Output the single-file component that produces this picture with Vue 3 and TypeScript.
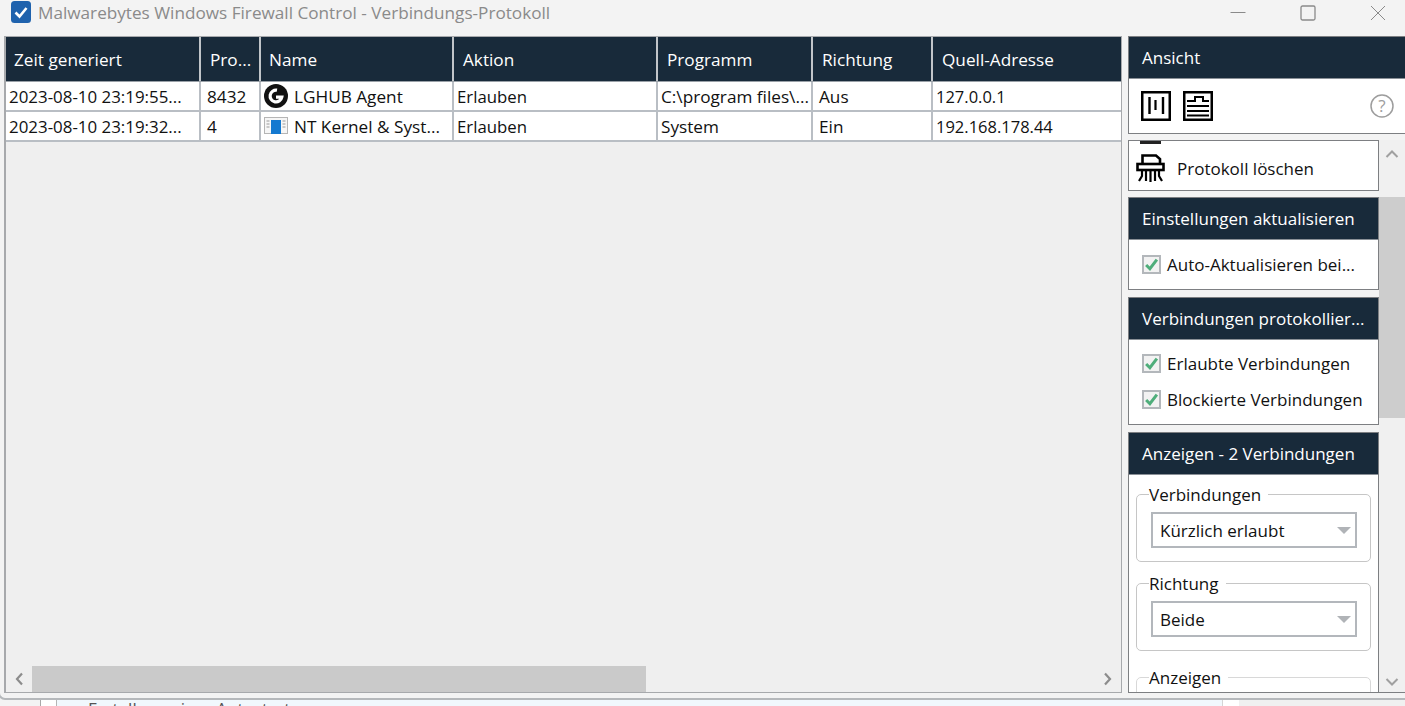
<script setup lang="ts">
interface Col { label: string; width: number }
const cols: Col[] = [
  { label: 'Zeit generiert', width: 195 },
  { label: 'Pro...', width: 60 },
  { label: 'Name', width: 193 },
  { label: 'Aktion', width: 204 },
  { label: 'Programm', width: 155 },
  { label: 'Richtung', width: 120 },
  { label: 'Quell-Adresse', width: 189 },
]
const rows = [
  { time: '2023-08-10 23:19:55...', pid: '8432', name: 'LGHUB Agent', icon: 'g', action: 'Erlauben', prog: 'C:\\program files\\...', dir: 'Aus', addr: '127.0.0.1' },
  { time: '2023-08-10 23:19:32...', pid: '4', name: 'NT Kernel & Syst...', icon: 'nt', action: 'Erlauben', prog: 'System', dir: 'Ein', addr: '192.168.178.44' },
]
const gridCols = cols.map((c) => c.width + 'px').join(' ')
</script>

<template>
  <div class="page">
    <header class="titlebar">
      <svg class="appicon" width="20" height="22" viewBox="0 0 20 22">
        <rect width="20" height="22" rx="3.500" fill="#1f62ad" />
        <path d="M4.500 11.500 8.500 15.500 15.500 7" fill="none" stroke="#fff" stroke-width="2.600" />
      </svg>
      <span class="title">Malwarebytes Windows Firewall Control - Verbindungs-Protokoll</span>
      <div class="winbtns">
        <svg width="16" height="16" viewBox="0 0 16 16"><path d="M0.500 7.500H15.500" stroke="#8a8a8a" /></svg>
        <svg width="16" height="16" viewBox="0 0 16 16"><rect x="1" y="1" width="14" height="14" rx="1.500" fill="none" stroke="#8a8a8a" stroke-width="1.300" /></svg>
        <svg width="16" height="16" viewBox="0 0 16 16"><path d="M1 1 15 15M15 1 1 15" stroke="#8a8a8a" /></svg>
      </div>
    </header>

    <main class="content">
      <section class="tablepanel">
        <div class="row head" :style="{ gridTemplateColumns: gridCols }">
          <div v-for="c in cols" :key="c.label" class="hcell">{{ c.label }}</div>
        </div>
        <div v-for="r in rows" :key="r.time" class="row body" :style="{ gridTemplateColumns: gridCols }">
          <div class="cell time">{{ r.time }}</div>
          <div class="cell pid">{{ r.pid }}</div>
          <div class="cell namecell">
            <svg v-if="r.icon === 'g'" class="rowicon" width="24" height="24" viewBox="0 0 24 24">
              <circle cx="12" cy="12" r="12" fill="#111" />
              <path d="M13 6.200A5.900 5.900 0 1 0 17.800 13.200H12" fill="none" stroke="#fff" stroke-width="3.200" />
            </svg>
            <svg v-else class="rowicon" width="24" height="18" viewBox="0 0 24 18">
              <rect x="0.500" y="0.500" width="23" height="16" fill="#f6f6f6" stroke="#b5b5b5" />
              <rect x="7" y="3" width="10" height="14" fill="#1479d0" />
              <path d="M2.500 4H5.500M2.500 7H5.500M2.500 10H5.500M18.500 4H21.500M18.500 7H21.500M18.500 10H21.500" stroke="#9a9a9a" />
            </svg>
            <span>{{ r.name }}</span>
          </div>
          <div class="cell action">{{ r.action }}</div>
          <div class="cell">{{ r.prog }}</div>
          <div class="cell dir">{{ r.dir }}</div>
          <div class="cell addr">{{ r.addr }}</div>
        </div>
        <div class="hscroll">
          <svg class="arrow" width="10" height="14" viewBox="0 0 10 14"><path d="M8 1.500 3 7l5 5.500" fill="none" stroke="#8c8c8c" stroke-width="2.200" /></svg>
          <div class="track"><div class="thumb"></div></div>
          <svg class="arrow" width="10" height="14" viewBox="0 0 10 14"><path d="M2 1.500 7 7l-5 5.500" fill="none" stroke="#8c8c8c" stroke-width="2.200" /></svg>
        </div>
      </section>

      <aside class="side">
        <section class="card ansicht">
          <h2 class="cardhead">Ansicht</h2>
          <div class="tools">
            <svg width="30" height="30" viewBox="0 0 30 30">
              <rect x="1.250" y="1.250" width="27.500" height="27.500" fill="none" stroke="#000" stroke-width="2.500" />
              <path d="M8.500 6V23M22 6V23" stroke="#000" stroke-width="2.400" />
              <path d="M14.500 9V19" stroke="#000" stroke-width="2.200" />
            </svg>
            <svg width="30" height="30" viewBox="0 0 30 30">
              <rect x="1.250" y="1.250" width="27.500" height="27.500" fill="none" stroke="#000" stroke-width="2.500" />
              <path d="M4 10H12V6H20V10H26M4 15H26M4 20H26M4 24.500H26" fill="none" stroke="#000" stroke-width="2" />
            </svg>
            <svg class="help" width="24" height="24" viewBox="0 0 24 24">
              <circle cx="12" cy="12" r="11" fill="none" stroke="#9d9d9d" stroke-width="1.500" />
              <text x="12" y="18" text-anchor="middle" font-size="17" fill="#9d9d9d" font-family="Open Sans, sans-serif">?</text>
            </svg>
          </div>
        </section>

        <div class="scrollarea">
          <div class="stack">
            <section class="card shred">
              <span class="stub"></span>
              <div class="shredrow">
                <svg width="30" height="30" viewBox="0 0 30 30">
                  <path d="M6.500 11V2.500H20L24 6V11" fill="none" stroke="#000" stroke-width="2.600" />
                  <rect x="1.500" y="11" width="26" height="6" fill="none" stroke="#000" stroke-width="2.600" />
                  <path d="M6 18V23L3 28M10 18V28M14.500 18V29M19 18V28M23 18V23L26 28" fill="none" stroke="#000" stroke-width="2.200" />
                </svg>
                <span>Protokoll löschen</span>
              </div>
            </section>

            <section class="card c1">
              <h2 class="cardhead">Einstellungen aktualisieren</h2>
              <div class="checks one">
                <label class="check"><span class="box"><svg width="15" height="15" viewBox="0 0 14 14"><path d="M2 7.500 5.500 11 12 2.500" fill="none" stroke="#4fae7b" stroke-width="2.800" /></svg></span>Auto-Aktualisieren bei...</label>
              </div>
            </section>

            <section class="card c2">
              <h2 class="cardhead">Verbindungen protokollier...</h2>
              <div class="checks">
                <label class="check"><span class="box"><svg width="15" height="15" viewBox="0 0 14 14"><path d="M2 7.500 5.500 11 12 2.500" fill="none" stroke="#4fae7b" stroke-width="2.800" /></svg></span>Erlaubte Verbindungen</label>
                <label class="check"><span class="box"><svg width="15" height="15" viewBox="0 0 14 14"><path d="M2 7.500 5.500 11 12 2.500" fill="none" stroke="#4fae7b" stroke-width="2.800" /></svg></span>Blockierte Verbindungen</label>
              </div>
            </section>

            <section class="card last">
              <h2 class="cardhead">Anzeigen - 2 Verbindungen</h2>
              <div class="groups">
                <fieldset class="group">
                  <legend>Verbindungen</legend>
                  <div class="select"><span>Kürzlich erlaubt</span><i class="caret"></i></div>
                </fieldset>
                <fieldset class="group">
                  <legend>Richtung</legend>
                  <div class="select"><span>Beide</span><i class="caret"></i></div>
                </fieldset>
                <fieldset class="group cut">
                  <legend>Anzeigen</legend>
                </fieldset>
              </div>
            </section>
          </div>
          <div class="vscroll">
            <svg width="14" height="10" viewBox="0 0 14 10"><path d="M1.500 8 7 2.500 12.500 8" fill="none" stroke="#a0a0a0" stroke-width="2" /></svg>
            <div class="vtrack"><div class="vthumb"></div></div>
            <svg width="14" height="10" viewBox="0 0 14 10"><path d="M1.500 2 7 7.500 12.500 2" fill="none" stroke="#a0a0a0" stroke-width="2" /></svg>
          </div>
        </div>
      </aside>
    </main>

    <footer class="behind">
      <div class="behindline"></div>
      <div class="behindrow">
        <div class="seg s1"></div>
        <div class="seg s2"></div>
        <div class="seg s3"><span class="behindtext">Erstellung einer Autostart</span></div>
        <div class="seg s4"></div>
        <div class="seg s5"></div>
      </div>
    </footer>
  </div>
</template>

<style>
html, body { margin: 0; background: #f3f3f3; overflow: hidden; }
</style>

<style scoped>
.page { width: 1405px; height: 706px; display: flex; flex-direction: column; overflow: hidden; background: #f3f3f3; font-family: "Open Sans", "Noto Sans", sans-serif; font-size: 17.2px; color: #111; }
.titlebar { height: 36px; flex: none; display: flex; align-items: flex-start; padding: 1px 19px 0 11px; box-sizing: border-box; }
.appicon { flex: none; }
.title { margin: 2px 0 0 7px; color: #8a8a8a; font-size: 17.170px; line-height: 20px; }
.winbtns { margin-left: auto; display: flex; gap: 54px; padding-top: 4px; }
.content { flex: none; height: 657px; display: flex; padding-left: 4px; gap: 6px; }
.tablepanel { width: 1118px; flex: none; background: #efefef; border: 1px solid #a7a9ac; border-left-width: 2px; box-sizing: border-box; display: flex; flex-direction: column; }
.row { display: grid; }
.head { height: 45px; background: #182a3a; border-bottom: 1px solid #9aa1a8; box-sizing: border-box; }
.hcell { color: #fff; display: flex; align-items: center; padding-left: 9px; border-right: 2px solid #c1c5c9; box-sizing: border-box; white-space: nowrap; overflow: hidden; }
.hcell:first-child { padding-left: 8px; }
.hcell:nth-child(3) { padding-left: 8px; }
.hcell:last-child { border-right: 0; }
.body { height: 30px; background: #fff; border-bottom: 2px solid #b9bec4; box-sizing: border-box; }
.cell { display: flex; align-items: center; padding-left: 3px; border-right: 2px solid #b9bec4; box-sizing: border-box; white-space: nowrap; overflow: hidden; }
.cell:last-child { border-right: 0; }
.time { font-size: 16.900px; }
.action { font-size: 16.800px; }
.pid { padding-left: 6px; }
.dir { padding-left: 6px; }
.addr { font-size: 16.500px; }
.namecell { gap: 6px; }
.rowicon { flex: none; }
.hscroll { margin-top: auto; height: 26px; display: flex; align-items: center; }
.arrow { flex: none; margin: 0 8px; }
.track { flex: 1; align-self: stretch; }
.thumb { width: 614px; height: 100%; background: #cacaca; }
.side { width: 277px; flex: none; display: flex; flex-direction: column; gap: 6px; font-size: 17px; }
.card { background: #fff; border: 1px solid #7d7f82; box-sizing: border-box; width: 251px; flex: none; }
.ansicht { width: 277px; height: 98px; border-right: 0; }
.cardhead { margin: 0; height: 42px; background: #182a3a; color: #fff; font-weight: 400; font-size: 17px; display: flex; align-items: center; padding-left: 13px; white-space: nowrap; border-bottom: 1px solid #8a9097; box-sizing: border-box; }
.tools { height: 53px; display: flex; align-items: center; gap: 12px; padding: 0 11px 0 12px; }
.help { margin-left: auto; }
.scrollarea { flex: 1; min-height: 0; display: flex; border-bottom: 1px solid #7d7f82; overflow: hidden; }
.stack { width: 251px; flex: none; display: flex; flex-direction: column; gap: 6px; overflow: hidden; }
.shred { height: 51px; position: relative; overflow: hidden; }
.stub { position: absolute; left: 11px; top: 0; width: 21px; height: 3px; background: #222; }
.shredrow { display: flex; align-items: center; gap: 11px; padding: 12px 0 0 7px; height: 30px; }
.c1 { height: 93px; }
.c2 { height: 128px; margin-top: 1px; }
.checks { padding: 5px 0 0 13px; display: flex; flex-direction: column; }
.checks.one { padding-top: 6px; }
.check { height: 36px; display: flex; align-items: center; gap: 6px; white-space: nowrap; }
.box { width: 19px; height: 19px; box-sizing: border-box; border: 2px solid #b3b7bb; background: #f2f2f2; display: flex; align-items: center; justify-content: center; flex: none; }
.last { flex: 1; border-bottom: 0; margin-top: 1px; }
.groups { padding: 9px 7px 0 7px; display: flex; flex-direction: column; gap: 11px; }
.group { margin: 0; padding: 0 13px 0 14px; border: 1px solid #c6c6c6; border-radius: 5px; height: 78px; box-sizing: border-box; flex: none; }
.group.cut { border-color: #d8d8d8; margin-top: 5px; }
.group legend { padding: 0 7px 0 0; margin-left: -2px; line-height: 21px; font-size: 17px; }
.select { margin-top: 7px; height: 36px; border: 2px solid #b3b7bc; box-sizing: border-box; display: flex; align-items: center; justify-content: space-between; padding: 0 4px 0 7px; background: #fff; }
.caret { width: 0; height: 0; border-left: 7px solid transparent; border-right: 7px solid transparent; border-top: 7px solid #b0b3b7; }
.vscroll { flex: 1; display: flex; flex-direction: column; align-items: center; justify-content: space-between; padding: 9px 0 5px; box-sizing: border-box; background: #f0f0f0; }
.vtrack { flex: 1; align-self: stretch; }
.vthumb { height: 221px; margin-top: 38px; background: #cdcdcd; }
.behind { flex: none; height: 13px; overflow: hidden; display: flex; flex-direction: column; background: #f3f3f3; }
.behindline { height: 7px; flex: none; box-sizing: border-box; border-bottom: 2px solid #b5b8bb; border-left: 2px solid #b5b8bb; border-bottom-left-radius: 7px; margin-left: -2px; }
.behindrow { flex: 1; display: flex; }
.seg { box-sizing: border-box; position: relative; overflow: hidden; }
.s1 { width: 41px; background: #f3f3f3; border-right: 1px solid #a9a9a9; }
.s2 { width: 16px; background: #fff; border-right: 1px solid #b5b5b5; }
.s3 { flex: 1; background: #f1f8fd; border-right: 1px solid #d5d5d5; }
.s4 { width: 16px; background: #fff; }
.s5 { width: 166px; background: #f0f0f0; }
.behindtext { position: absolute; left: 31px; top: -3px; color: #555; font-size: 17px; line-height: 23px; white-space: nowrap; }
</style>
